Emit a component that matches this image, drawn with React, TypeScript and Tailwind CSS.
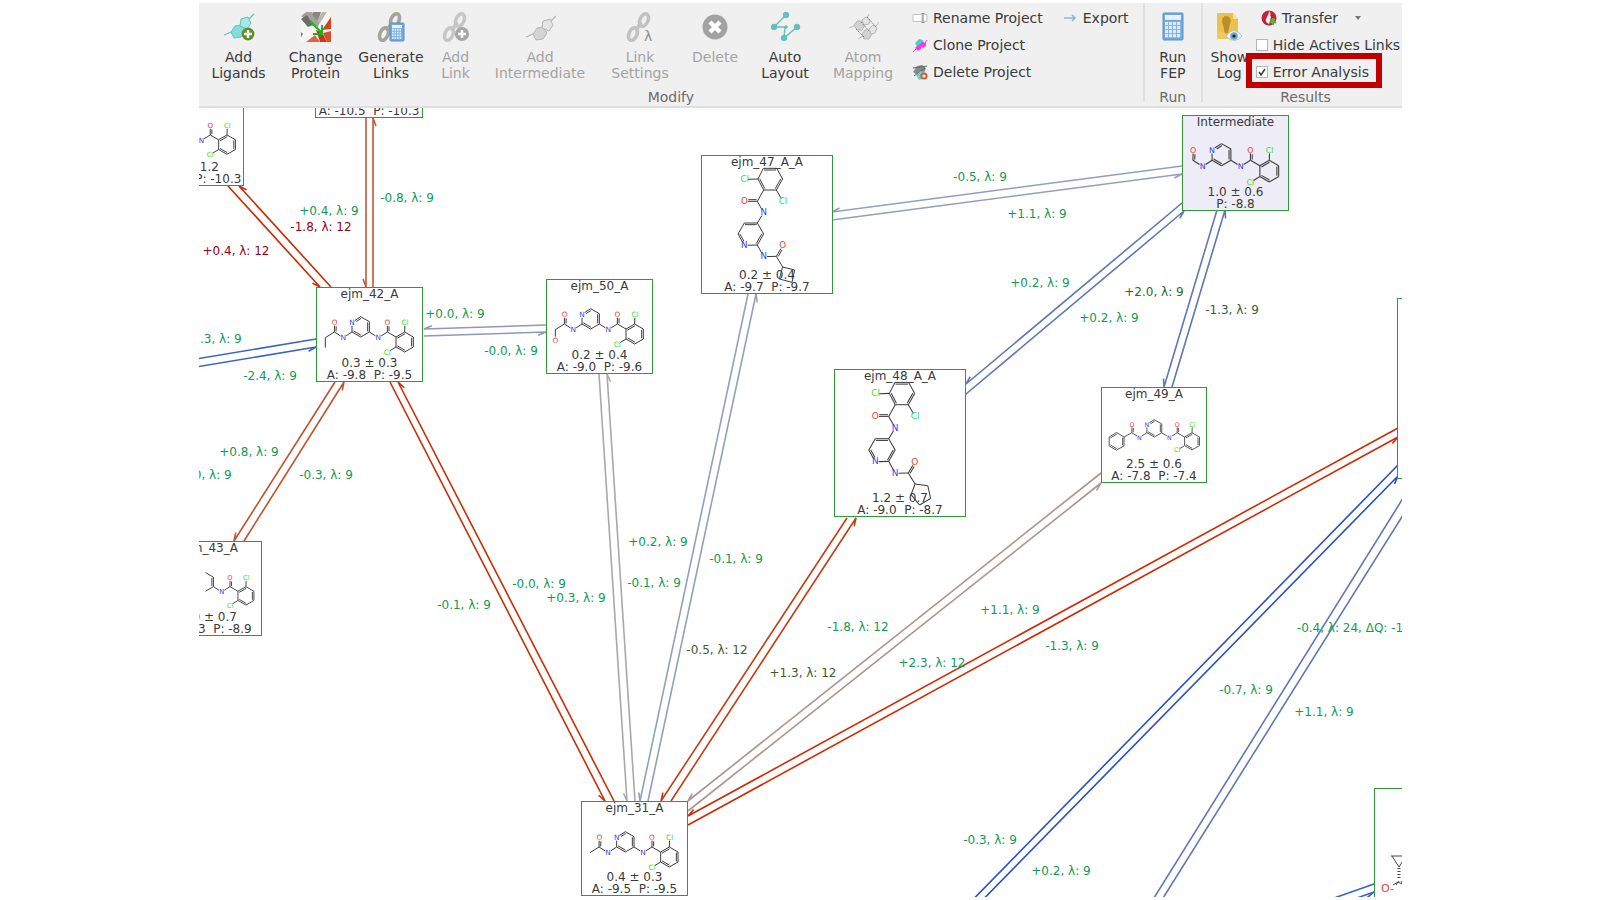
import { useState } from "react";
import type { ReactNode } from "react";

// Scene coordinates of the graph's top left visible corner
const VIEW = { x: 199, y: 108 };

type Atom = [number, number, string?];
type Bond = [number, number, number?];
type Molecule = { atoms: Atom[]; bonds: Bond[]; transform?: string; size?: number };

const coreAtoms: Atom[] = [
  [54, 138],
  [55, 109, "O"],
  [81, 155, "N"],
  [107, 138],
  [107, 109, "N"],
  [133, 92],
  [159, 107],
  [159, 138],
  [133, 153],
  [186, 155, "N"],
  [213, 138],
  [213, 109, "O"],
  [239, 153],
  [265, 138],
  [291, 153],
  [291, 183],
  [265, 198],
  [239, 183],
  [266, 109, "Cl"],
  [213, 199, "Cl"],
];

const coreBonds: Bond[] = [
  [0, 1, 1],
  [0, 2],
  [2, 3],
  [3, 4],
  [4, 5, 1],
  [5, 6],
  [6, 7, 1],
  [7, 8],
  [8, 3, 1],
  [7, 9],
  [9, 10],
  [10, 11, 1],
  [10, 12],
  [12, 13, 1],
  [13, 14],
  [14, 15, 1],
  [15, 16],
  [16, 17, 1],
  [17, 12],
  [13, 18],
  [17, 19],
];

const extend = (atoms: Atom[], bonds: Bond[], transform?: string): Molecule => ({
  atoms: [...coreAtoms, ...atoms],
  bonds: [...coreBonds, ...bonds],
  transform,
});

// right hand part of the core, for nodes that stick out of the view
const tail = (from: number, transform: string): Molecule => ({
  atoms: coreAtoms.slice(from),
  bonds: coreBonds
    .filter(([a, b]) => a >= from && b >= from)
    .map(([a, b, double]): Bond => [a - from, b - from, double]),
  transform,
});

const tallAtoms: Atom[] = [
  [187, 40],
  [227, 40],
  [245, 72],
  [226, 105],
  [188, 105],
  [171, 72],
  [131, 73, "Cl"],
  [246, 139, "Cl"],
  [169, 139],
  [130, 139, "O"],
  [188, 173, "N"],
  [169, 204],
  [130, 204],
  [111, 237],
  [130, 271, "N"],
  [169, 270],
  [188, 237],
  [188, 305, "N"],
  [226, 304],
  [245, 272, "O"],
];

const tallBonds: Bond[] = [
  [0, 1, 1],
  [1, 2],
  [2, 3, 1],
  [3, 4],
  [4, 5, 1],
  [5, 0],
  [5, 6],
  [3, 7],
  [4, 8],
  [8, 9, 1],
  [8, 10],
  [10, 11],
  [12, 11, 1],
  [12, 13],
  [14, 13, 1],
  [14, 15],
  [16, 15, 1],
  [16, 11],
  [15, 17],
  [17, 18],
  [18, 19, 1],
];

const molecules: Record<string, Molecule> = {
  methyl: extend([[27, 155]], [[0, 20]]),
  ethyl: extend([[27, 155], [27, 185]], [[0, 20], [20, 21]], "translate(1 -3)"),
  hydroxy: extend([[27, 155], [27, 186, "O"]], [[0, 20], [20, 21]], "translate(1 -3)"),
  formyl: extend([], [], "translate(-26 -14) scale(1.086)"),
  amide: tail(9, "translate(10 -2) scale(0.97)"),
  aminopyridine: tail(5, "translate(26 10) scale(0.92)"),
  phenyl: extend(
    [[27, 153], [1, 137], [-25, 153], [-25, 184], [0, 199], [27, 184]],
    [[0, 20], [20, 21], [22, 21, 1], [22, 23], [24, 23, 1], [24, 25], [20, 25, 1]],
    "translate(46 19) scale(0.857)"
  ),
  cyclobutyl: {
    atoms: [...tallAtoms, [245, 336], [281, 345], [273, 382], [235, 372]],
    bonds: [...tallBonds, [18, 20], [20, 21], [21, 22], [22, 23], [23, 20]],
    size: 26,
  },
  cyclopentyl: {
    atoms: [...tallAtoms, [246, 336], [283, 341], [291, 378], [259, 397], [234, 367]],
    bonds: [...tallBonds, [18, 20], [20, 21], [21, 22], [22, 23], [23, 24], [24, 20]],
    transform: "translate(-10 -1) scale(1.03)",
    size: 26,
  },
};

type GraphNode = {
  x: number;
  y: number;
  w: number;
  h: number;
  name?: string;
  mean?: string;
  energy?: string;
  mol?: string;
  shaded?: boolean;
};

const nodes: GraphNode[] = [
  { x: 138, y: 91, w: 106, h: 95, mean: "1.3 ± 1.2", energy: "A: -11.0  P: -10.3", mol: "amide" },
  { x: 315, y: 23, w: 108, h: 95, energy: "A: -10.5  P: -10.3" },
  { x: 316, y: 287, w: 107, h: 95, name: "ejm_42_A", mean: "0.3 ± 0.3", energy: "A: -9.8  P: -9.5", mol: "ethyl" },
  { x: 546, y: 279, w: 107, h: 95, name: "ejm_50_A", mean: "0.2 ± 0.4", energy: "A: -9.0  P: -9.6", mol: "hydroxy" },
  { x: 701, y: 155, w: 132, h: 139, name: "ejm_47_A_A", mean: "0.2 ± 0.4", energy: "A: -9.7  P: -9.7", mol: "cyclobutyl" },
  { x: 834, y: 369, w: 132, h: 148, name: "ejm_48_A_A", mean: "1.2 ± 0.7", energy: "A: -9.0  P: -8.7", mol: "cyclopentyl" },
  { x: 1101, y: 387, w: 106, h: 96, name: "ejm_49_A", mean: "2.5 ± 0.6", energy: "A: -7.8  P: -7.4", mol: "phenyl" },
  { x: 1182, y: 115, w: 107, h: 96, name: "Intermediate", mean: "1.0 ± 0.6", energy: "P: -8.8", mol: "formyl", shaded: true },
  { x: 581, y: 801, w: 107, h: 95, name: "ejm_31_A", mean: "0.4 ± 0.3", energy: "A: -9.5  P: -9.5", mol: "methyl" },
  { x: 156, y: 541, w: 106, h: 95, name: "ejm_43_A", mean: "1.0 ± 0.7", energy: "A: -8.3  P: -8.9", mol: "aminopyridine" },
  { x: 1397, y: 298, w: 132, h: 181 },
];

// x1, y1, x2, y2, colour; the arrow head sits on the second point
type Link = [number, number, number, number, string];

const links: Link[] = [
  [228, 186, 320, 287, "#cc2900"],
  [331, 287, 239, 186, "#cc2900"],
  [366, 118, 366, 287, "#bf5a3a"],
  [373, 287, 373, 118, "#bf5a3a"],
  [546, 325, 424, 329, "#8f99b5"],
  [424, 336, 546, 332, "#8f99b5"],
  [316, 339, 100, 375, "#4064c6"],
  [100, 383, 316, 347, "#4064c6"],
  [335, 382, 234, 541, "#c0522f"],
  [244, 541, 344, 382, "#c0522f"],
  [390, 382, 605, 801, "#cc2d05"],
  [614, 801, 398, 382, "#cc2d05"],
  [599, 374, 627, 801, "#aba8aa"],
  [635, 801, 607, 374, "#aba8aa"],
  [748, 294, 640, 801, "#949fba"],
  [648, 801, 756, 294, "#949fba"],
  [847, 518, 661, 801, "#c53c14"],
  [671, 801, 856, 518, "#c53c14"],
  [1101, 473, 688, 801, "#ac948e"],
  [688, 811, 1101, 483, "#ac948e"],
  [1398, 428, 688, 816, "#cf2a04"],
  [688, 825, 1398, 437, "#cf2a04"],
  [1182, 166, 832, 212, "#949fba"],
  [832, 220, 1182, 174, "#949fba"],
  [1182, 203, 966, 384, "#5f77b8"],
  [966, 394, 1184, 211, "#5f77b8"],
  [1217, 210, 1164, 387, "#5f77b8"],
  [1172, 387, 1225, 210, "#5f77b8"],
  [1398, 465, 952, 921, "#2850c4"],
  [962, 921, 1398, 476, "#2850c4"],
  [1410, 487, 1139, 922, "#5f77b8"],
  [1148, 922, 1420, 488, "#5f77b8"],
  [1374, 884, 1300, 910, "#3d60c8"],
  [1300, 918, 1374, 892, "#3d60c8"],
];

const GREEN = "text-[#0f9b55]";
const RED = "text-[#960012]";
const OLIVE = "text-[#3d5c2a]";
const FOREST = "text-[#2c662f]";

const labels: [number, number, string, string][] = [
  [329, 211, "+0.4, λ: 9", GREEN],
  [321, 227, "-1.8, λ: 12", RED],
  [236, 251, "+0.4, λ: 12", RED],
  [407, 198, "-0.8, λ: 9", GREEN],
  [455, 314, "+0.0, λ: 9", GREEN],
  [511, 351, "-0.0, λ: 9", GREEN],
  [212, 339, "+2.3, λ: 9", GREEN],
  [270, 376, "-2.4, λ: 9", GREEN],
  [249, 452, "+0.8, λ: 9", GREEN],
  [202, 475, "+1.0, λ: 9", GREEN],
  [326, 475, "-0.3, λ: 9", GREEN],
  [539, 584, "-0.0, λ: 9", GREEN],
  [576, 598, "+0.3, λ: 9", GREEN],
  [464, 605, "-0.1, λ: 9", GREEN],
  [658, 542, "+0.2, λ: 9", GREEN],
  [736, 559, "-0.1, λ: 9", GREEN],
  [654, 583, "-0.1, λ: 9", GREEN],
  [717, 650, "-0.5, λ: 12", OLIVE],
  [803, 673, "+1.3, λ: 12", OLIVE],
  [858, 627, "-1.8, λ: 12", GREEN],
  [932, 663, "+2.3, λ: 12", GREEN],
  [1010, 610, "+1.1, λ: 9", GREEN],
  [1072, 646, "-1.3, λ: 9", GREEN],
  [980, 177, "-0.5, λ: 9", GREEN],
  [1037, 214, "+1.1, λ: 9", GREEN],
  [1040, 283, "+0.2, λ: 9", GREEN],
  [1109, 318, "+0.2, λ: 9", GREEN],
  [1154, 292, "+2.0, λ: 9", FOREST],
  [1232, 310, "-1.3, λ: 9", FOREST],
  [1350, 628, "-0.4, λ: 24, ΔQ: -1", GREEN],
  [1246, 690, "-0.7, λ: 9", GREEN],
  [1324, 712, "+1.1, λ: 9", GREEN],
  [990, 840, "-0.3, λ: 9", GREEN],
  [1061, 871, "+0.2, λ: 9", GREEN],
];

const atomColor: Record<string, string> = { N: "#3b3bf0", O: "#f0402f", Cl: "#35dd35" };

const BondLine = ({ a, b, double }: { a: Atom; b: Atom; double: boolean }) => {
  const len = Math.hypot(b[0] - a[0], b[1] - a[1]);
  const ux = (b[0] - a[0]) / len;
  const uy = (b[1] - a[1]) / len;
  const s = a[2] ? 10 : 0;
  const e = b[2] ? 10 : 0;
  const x1 = a[0] + ux * s;
  const y1 = a[1] + uy * s;
  const x2 = b[0] - ux * e;
  const y2 = b[1] - uy * e;
  return (
    <>
      <line x1={x1} y1={y1} x2={x2} y2={y2} />
      {double && (
        <line
          x1={x1 - uy * 5 + ux * 2}
          y1={y1 + ux * 5 + uy * 2}
          x2={x2 - uy * 5 - ux * 2}
          y2={y2 + ux * 5 - uy * 2}
        />
      )}
    </>
  );
};

const MoleculeDrawing = ({ mol, w, h }: { mol: Molecule; w: number; h: number }) => (
  <svg viewBox={`0 0 ${w * 3} ${h * 3}`} className="absolute -inset-px" width={w} height={h}>
    <g transform={mol.transform}>
      <g stroke="#3c3c3c" strokeWidth="3">
        {mol.bonds.map(([i, j, double], k) => (
          <BondLine key={k} a={mol.atoms[i]} b={mol.atoms[j]} double={!!double} />
        ))}
      </g>
      {mol.atoms.map(([x, y, symbol], i) =>
        symbol ? (
          <text
            key={i}
            x={x}
            y={y + 8}
            fontSize={mol.size ?? 22}
            textAnchor="middle"
            fill={atomColor[symbol]}
          >
            {symbol}
          </text>
        ) : null
      )}
    </g>
  </svg>
);

const NodeCard = ({ node }: { node: GraphNode }) => (
  <div
    className={`absolute flex flex-col justify-between border border-[#2f9a35] text-center text-xs leading-3 text-[#3a3a3a] ${
      node.shaded ? "bg-[#eeecf6]" : "bg-white"
    }`}
    style={{ left: node.x - VIEW.x, top: node.y - VIEW.y, width: node.w, height: node.h }}
  >
    {node.mol && <MoleculeDrawing mol={molecules[node.mol]} w={node.w} h={node.h} />}
    <div className="relative">{node.name}</div>
    <div className="relative whitespace-pre">
      <div>{node.mean}</div>
      <div>{node.energy}</div>
    </div>
  </div>
);

const LinkLine = ({ link }: { link: Link }) => {
  const [x1, y1, x2, y2, color] = link;
  const len = Math.hypot(x2 - x1, y2 - y1);
  const ux = (x2 - x1) / len;
  const uy = (y2 - y1) / len;
  // half arrow head, on the outer side of the pair
  const hx = x2 - ux * 8 - uy * 3;
  const hy = y2 - uy * 8 + ux * 3;
  return <path d={`M${x1} ${y1}L${x2} ${y2}L${hx} ${hy}`} stroke={color} strokeWidth="1.6" fill="none" />;
};

const Graph = () => (
  <main className="relative flex-1 overflow-hidden bg-white">
    <svg className="absolute inset-0 h-full w-full">
      <g transform={`translate(${-VIEW.x} ${-VIEW.y})`}>
        {links.map((link, i) => (
          <LinkLine key={i} link={link} />
        ))}
      </g>
    </svg>

    {nodes.map((node, i) => (
      <NodeCard key={i} node={node} />
    ))}

    <div
      className="absolute border border-[#2f9a35] bg-white"
      style={{ left: 1374 - VIEW.x, top: 788 - VIEW.y, width: 132, height: 150 }}
    >
      <svg width="60" height="110" fill="none" stroke="#444">
        <path d="M16 67h14M17 67l7 11l7-11M18 96l5-3l6 3M24 92l-3 4M26 92l3 5" />
        <path d="M24 79v12" strokeWidth="3" strokeDasharray="1 2" />
        <text x="6" y="103" fontSize="11" fill="#f0402f" stroke="none">
          O-
        </text>
      </svg>
    </div>

    {labels.map(([x, y, text, color], i) => (
      <span
        key={i}
        className={`absolute -translate-x-1/2 -translate-y-1/2 text-xs leading-3 whitespace-nowrap ${color}`}
        style={{ left: x - VIEW.x, top: y - VIEW.y }}
      >
        {text}
      </span>
    ))}
  </main>
);

const Plus = ({ cx, cy, r, fill }: { cx: number; cy: number; r: number; fill: string }) => (
  <>
    <circle cx={cx} cy={cy} r={r} fill={fill} />
    <path d={`M${cx - 4} ${cy}h8M${cx} ${cy - 4}v8`} stroke="#fff" strokeWidth="2.4" />
  </>
);

const Rings = ({ stroke, fill, light }: { stroke: string; fill: string; light: string }) => (
  <g stroke={stroke} strokeLinejoin="round">
    <path d="M26 8l5-5M8 21l-7 3" fill="none" strokeWidth="1.2" />
    <path d="M8 21l4-6l6-1l4 6l-4 6l-7 1z" fill={fill} />
    <path d="M18 8l7-2l3 6l-4 6l-7-3z" fill={light} />
  </g>
);

const Chain = ({ color }: { color: string }) => (
  <g fill="none" stroke={color} strokeWidth="3.6">
    <ellipse cx="20" cy="9" rx="4" ry="6.6" transform="rotate(24 20 9)" />
    <ellipse cx="9" cy="23" rx="4" ry="6.6" transform="rotate(24 9 23)" />
    <path d="M17 11l-5 9" />
  </g>
);

const Calculator = ({ x, y, w, h }: { x: number; y: number; w: number; h: number }) => {
  const cw = (w - 4) / 4;
  const ch = (h * 0.6) / 4;
  return (
    <g>
      <rect x={x} y={y} width={w} height={h} rx="1" fill="#75a9dc" stroke="#5a8fcb" />
      <rect x={x + 2} y={y + 2} width={w - 4} height={h * 0.18} fill="#e6f1fb" />
      {Array.from({ length: 16 }, (_, i) => (
        <rect
          key={i}
          x={x + 2 + (i % 4) * cw}
          y={y + h * 0.33 + Math.floor(i / 4) * ch}
          width={cw - 0.8}
          height={ch - 0.8}
          fill="#dcebfa"
        />
      ))}
    </g>
  );
};

const ProteinIcon = () => (
  <>
    <path d="M1 1h30v30H1z" fill="#f7f5f4" />
    <path d="M1 5l5-4h6l8 10l-2 5l-5-1z" fill="#a5a29d" />
    <path d="M1 8l6-4l6 10l-5 2z" fill="#6f6a6c" />
    <path d="M13 1h8l-3 9l-5-5z" fill="#8b8684" />
    <path d="M22 1h5l-7 11l-3-2z" fill="#b9b5b0" />
    <path d="M31 6v12l-9 1z" fill="#cf4420" />
    <path d="M31 20v11h-4l-4-9z" fill="#d5512d" />
    <path d="M16 19l6 2l5 10h-7z" fill="#c23c1c" />
    <path d="M6 31l9-7l5 7z" fill="#dd6540" />
    <path d="M1 21l2 2l-2 3z" fill="#777" />
    <path d="M10 10l12 12M22 14v9h-9" fill="none" stroke="#12b81c" strokeWidth="2" />
  </>
);

const AutoLayoutIcon = () => (
  <g fill="#62c0bb" stroke="#62c0bb">
    <path d="M17 4L5 16l11 0l-1 11L28 16" fill="none" strokeWidth="1.4" />
    <circle cx="17" cy="4" r="2.8" />
    <circle cx="5" cy="16" r="2.8" />
    <circle cx="28" cy="16" r="2.8" />
    <circle cx="15" cy="27" r="2.8" />
    <circle cx="17" cy="16" r="1.3" />
  </g>
);

const AtomMappingIcon = () => (
  <g stroke="#b8b8b8" fill="#d2d2d2">
    <path d="M2 17l5-2M20 7l2-4M11 28l5-3M29 15l3-4" fill="none" />
    <path d="M7 14l3-4h5l3 4l-3 5h-5z" />
    <path d="M15 9l4-3l4 3l-1 4l-5 1z" fill="#e4e4e4" />
    <path d="M15 23l3-4h5l2 4l-3 5h-5z" />
    <path d="M22 18l4-4l4 3l-2 5l-4 1z" fill="#e4e4e4" />
    <path d="M9 18l8 8M14 11l8 9M20 6l9 10" fill="none" stroke="#777" strokeDasharray="1.5 1" />
  </g>
);

const ShowLogIcon = () => (
  <>
    <path d="M4 2h16l5 6v19H4z" fill="#ecc04c" />
    <path d="M20 2v6h5z" fill="#f8e3a4" />
    <path d="M4 20l21 5v3H4z" fill="#f0c95f" />
    <path d="M13 5c4 0 6 4 4 8c-1 3-1 5-2 9c-2 1-4 0-4-3c0-4-2-6-2-9c0-3 2-5 4-5z" fill="#b98f33" />
    <path d="M13 25q8-11 16 0q-8 9-16 0z" fill="#e9f3f6" stroke="#a3cad6" />
    <circle cx="21" cy="25" r="3.8" fill="#6fa9c0" />
    <circle cx="21" cy="25" r="1.6" fill="#10232e" />
  </>
);

type ToolProps = { label: string; width: string; disabled?: boolean; children: ReactNode };

const ToolButton = ({ label, width, disabled, children }: ToolProps) => (
  <button
    disabled={disabled}
    className={`flex shrink-0 flex-col items-center gap-1.5 pt-2 leading-4 ${width} ${
      disabled ? "text-[#a3a3a3]" : "cursor-pointer text-[#3a3a3a]"
    }`}
  >
    <svg viewBox="0 0 32 32" className="h-8 w-8" fill="none">
      {children}
    </svg>
    <span className="whitespace-pre-line">{label}</span>
  </button>
);

const SmallButton = ({ label, children }: { label: string; children: ReactNode }) => (
  <button className="flex h-[26px] cursor-pointer items-center gap-[5px] whitespace-nowrap">
    <svg viewBox="0 0 16 16" className="h-4 w-4" fill="none">
      {children}
    </svg>
    {label}
  </button>
);

type CheckProps = { label: string; checked: boolean; onChange: (value: boolean) => void };

const CheckOption = ({ label, checked, onChange }: CheckProps) => (
  <label className="flex h-[26px] cursor-pointer items-center gap-[5px] whitespace-nowrap">
    <span className="relative flex h-3 w-3">
      <input
        type="checkbox"
        checked={checked}
        onChange={(e) => onChange(e.target.checked)}
        className="h-3 w-3 appearance-none border border-[#b5b5b5] bg-white"
      />
      {checked && (
        <svg viewBox="0 0 12 12" className="pointer-events-none absolute inset-0" fill="none">
          <path d="M3 6l2 3l4-6" stroke="#333" strokeWidth="1.4" />
        </svg>
      )}
    </span>
    {label}
  </label>
);

const Group = ({ title, children }: { title: string; children: ReactNode }) => (
  <section className="flex shrink-0 flex-col">
    <div className="flex h-[85px]">{children}</div>
    <h2 className="text-center leading-[18px] text-[#6b6b6b]">{title}</h2>
  </section>
);

const Toolbar = () => {
  const [hideActives, setHideActives] = useState(false);
  const [errorAnalysis, setErrorAnalysis] = useState(true);

  return (
    <header className="flex shrink-0 overflow-hidden border-b-2 border-[#dedede] bg-[#f0f0f0] text-sm text-[#3a3a3a]">
      <Group title="Modify">
        <ToolButton label={"Add\nLigands"} width="w-[79px]">
          <Rings stroke="#5fc4c0" fill="#86dcd8" light="#a9e8e4" />
          <Plus cx={25} cy={23} r={6.4} fill="#5b9127" />
        </ToolButton>
        <ToolButton label={"Change\nProtein"} width="w-[75px]">
          <ProteinIcon />
        </ToolButton>
        <ToolButton label={"Generate\nLinks"} width="w-[76px]">
          <Chain color="#a5a49a" />
          <Calculator x={15} y={12} w={14} h={18} />
        </ToolButton>
        <ToolButton label={"Add\nLink"} width="w-[53px]" disabled>
          <Chain color="#c6c6c6" />
          <Plus cx={22} cy={23} r={7} fill="#a6a6a6" />
        </ToolButton>
        <ToolButton label={"Add\nIntermediate"} width="w-[116px]" disabled>
          <g transform="translate(1 2)">
            <Rings stroke="#b4b4b4" fill="#d4d4d4" light="#e4e4e4" />
          </g>
        </ToolButton>
        <ToolButton label={"Link\nSettings"} width="w-[84px]" disabled>
          <Chain color="#c2c2c2" />
          <text x="20" y="30" fontSize="14" fill="#8c8c8c">
            λ
          </text>
        </ToolButton>
        <ToolButton label="Delete" width="w-[66px]" disabled>
          <circle cx="16" cy="16" r="12.5" fill="#a2a2a2" />
          <path d="M11 11l10 10M21 11l-10 10" stroke="#fff" strokeWidth="4.4" />
        </ToolButton>
        <ToolButton label={"Auto\nLayout"} width="w-[74px]">
          <AutoLayoutIcon />
        </ToolButton>
        <ToolButton label={"Atom\nMapping"} width="w-[82px]" disabled>
          <AtomMappingIcon />
        </ToolButton>
        <div className="flex flex-col gap-px pt-0.5 pl-2">
          <SmallButton label="Rename Project">
            <path d="M1 4.500h9v7h-9zM12 4.500h3v7h-3" fill="#fff" stroke="#c4c4c4" />
            <path d="M9.500 3.500h3M11 3.500v9M9.500 12.500h3" stroke="#888" />
          </SmallButton>
          <SmallButton label="Clone Project">
            <path d="M3 6l4-4l4 1l1 3l-6 5z" fill="#52c9cd" />
            <path d="M1 15l3-3M13 6l2-3" stroke="#d63ad0" />
            <path d="M3 11l3-3l3 1l0 3l-3 2zM7 8l3-3l4 1v3l-3 2z" fill="#f03be6" />
          </SmallButton>
          <SmallButton label="Delete Project">
            <path d="M1 8l4-6l5-1l4 3l-2 5l-7 2z" fill="#858b8b" />
            <path d="M1 4l14-2M2 12l11-8" stroke="#5f6666" />
            <path d="M4 11l5-4l5 2v5l-7 2z" fill="#6fd0d0" />
            <circle cx="12" cy="12" r="2.600" fill="#fff" stroke="#dd5a30" strokeWidth="2" />
          </SmallButton>
        </div>
        <div className="flex w-[100px] shrink-0 flex-col pt-0.5 pl-[19px]">
          <SmallButton label="Export">
            <path d="M2 8h11M10 5l3 3l-3 3" stroke="#82bccb" strokeWidth="1.6" />
          </SmallButton>
        </div>
      </Group>

      <div className="mb-1 w-0.5 shrink-0 bg-[#e0e0e0]" />

      <Group title="Run">
        <ToolButton label={"Run\nFEP"} width="w-14">
          <Calculator x={6} y={2} w={20} h={27} />
        </ToolButton>
      </Group>

      <div className="mb-1 w-0.5 shrink-0 bg-[#e0e0e0]" />

      <Group title="Results">
        <ToolButton label={"Show\nLog"} width="w-[53px]">
          <ShowLogIcon />
        </ToolButton>
        <div className="flex flex-col gap-px pt-0.5 pr-2">
          <button className="flex h-[26px] cursor-pointer items-center gap-[5px] pl-[5px]">
            <svg viewBox="0 0 16 16" className="h-4 w-4" fill="none">
              <circle cx="8" cy="8" r="7.500" fill="#c81f3a" />
              <path d="M8 1c3 3 0 4 2 6l-2 7l-3-2c-1-4 3-6 3-11z" fill="#fff" />
              <path d="M9 9l6 4M12 8v7M9 13l5-4" stroke="#5fae3c" strokeWidth="2" />
            </svg>
            Transfer
            <svg viewBox="0 0 6 4" className="ml-3 h-1 w-1.5">
              <path d="M0 0h6l-3 4z" fill="#777" />
            </svg>
          </button>
          <CheckOption label="Hide Actives Links" checked={hideActives} onChange={setHideActives} />
          <div className="relative">
            <CheckOption label="Error Analysis" checked={errorAnalysis} onChange={setErrorAnalysis} />
            <div className="pointer-events-none absolute -top-1.5 -left-2.5 h-[35px] w-[136px] border-6 border-[#c00000]" />
          </div>
        </div>
      </Group>
    </header>
  );
};

const App = () => {
  return (
    <div className="flex min-h-screen flex-col bg-white py-[3px] pr-[198px] pl-[199px] font-['DejaVu_Sans',sans-serif]">
      <Toolbar />
      <Graph />
    </div>
  );
};

export default App;
